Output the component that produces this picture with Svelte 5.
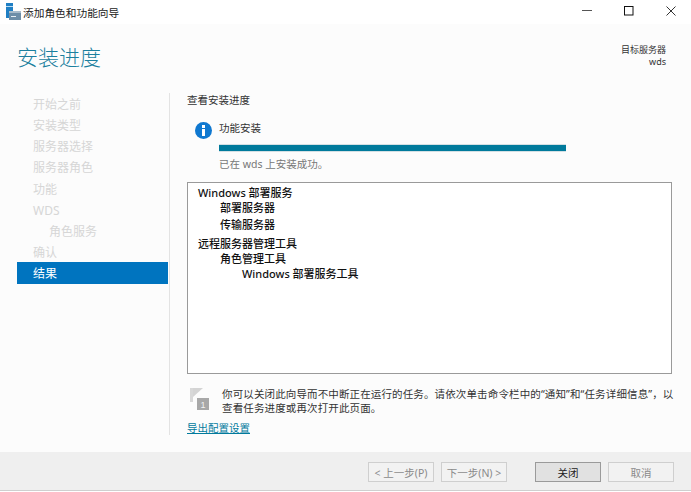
<script>
  // 向导左侧步骤，最后一项为当前页。
  const steps = [
    { label: '开始之前' },
    { label: '安装类型' },
    { label: '服务器选择' },
    { label: '服务器角色' },
    { label: '功能' },
    { label: 'WDS' },
    { label: '角色服务', sub: true },
    { label: '确认' },
    { label: '结果', active: true },
  ];

  const results = [
    { label: 'Windows 部署服务', level: 0, gap: 15 },
    { label: '部署服务器', level: 1, gap: 17 },
    { label: '传输服务器', level: 1, gap: 19 },
    { label: '远程服务器管理工具', level: 0, gap: 15 },
    { label: '角色管理工具', level: 1, gap: 15 },
    { label: 'Windows 部署服务工具', level: 2, gap: 15 },
  ];
</script>

<div class="window">
  <header class="titlebar">
    <svg class="appicon" width="15" height="18" viewBox="0 0 15 18" aria-hidden="true">
      <rect x="0" y="0" width="7" height="15" fill="#1f7fc4" />
      <rect x="0" y="3" width="7" height="1" fill="#bcdcf2" />
      <rect x="3" y="8" width="12" height="9" fill="#6d8ea8" />
      <rect x="3" y="8" width="12" height="2" fill="#a9bccb" />
      <rect x="5" y="13" width="5" height="1" fill="#e6eef4" />
    </svg>
    <span class="title">添加角色和功能向导</span>
    <div class="controls">
      <svg width="10" height="10" viewBox="0 0 10 10" aria-hidden="true">
        <path d="M0 4.5H10" stroke="#555" fill="none" />
      </svg>
      <svg width="10" height="10" viewBox="0 0 10 10" aria-hidden="true">
        <rect x="0.5" y="0.5" width="8.5" height="8.5" stroke="#111" fill="none" />
      </svg>
      <svg width="10" height="10" viewBox="0 0 10 10" aria-hidden="true">
        <path d="M0.5 0.5L9.5 9.5M9.5 0.5L0.5 9.5" stroke="#333" fill="none" />
      </svg>
    </div>
  </header>

  <div class="body">
    <div class="heading">
      <h1>安装进度</h1>
      <div class="server">
        <div>目标服务器</div>
        <div>wds</div>
      </div>
    </div>

    <div class="main">
      <nav class="steps">
        {#each steps as step}
          <div class="step" class:sub={step.sub} class:active={step.active}>{step.label}</div>
        {/each}
      </nav>

      <section class="content">
        <div class="subhead">查看安装进度</div>

        <div class="progress">
          <svg class="info" width="17" height="17" viewBox="0 0 17 17" aria-hidden="true">
            <circle cx="8.5" cy="8.5" r="8.5" fill="#0f78d0" />
            <rect x="7" y="3" width="3" height="3" fill="#fff" />
            <rect x="7" y="7" width="3" height="7" fill="#fff" />
          </svg>
          <div class="progress-body">
            <div class="progress-title">功能安装</div>
            <div class="bar"></div>
            <div class="progress-note">已在 wds 上安装成功。</div>
          </div>
        </div>

        <div class="results">
          {#each results as row}
            <div class="row level{row.level}" style="height: {row.gap}px">{row.label}</div>
          {/each}
        </div>

        <div class="notice">
          <svg class="flag" width="20" height="24" viewBox="0 0 20 24" aria-hidden="true">
            <rect x="0" y="0" width="3" height="14" fill="#d8d8d8" />
            <path d="M3 0H13L3 9Z" fill="#d4d4d4" />
            <rect x="7" y="10" width="12" height="12" fill="#a8a8a8" />
            <text x="13" y="20" text-anchor="middle" class="flagnum">1</text>
          </svg>
          <p>你可以关闭此向导而不中断正在运行的任务。请依次单击命令栏中的“通知”和“任务详细信息”，以查看任务进度或再次打开此页面。</p>
        </div>

        <a class="export" href="#export">导出配置设置</a>
      </section>
    </div>
  </div>

  <footer class="footer">
    <button disabled>&lt; 上一步(P)</button>
    <button disabled class="next">下一步(N) &gt;</button>
    <button class="primary">关闭</button>
    <button disabled>取消</button>
  </footer>
</div>

<style>
  :global(body) {
    margin: 0;
    background: #fff;
  }
  .window {
    width: 691px;
    height: 492px;
    display: flex;
    flex-direction: column;
    font-family: "Noto Sans", "Noto Sans CJK SC", sans-serif;
    font-size: 11px;
    color: #222;
    overflow: hidden;
  }
  .titlebar {
    height: 24px;
    flex: none;
    display: flex;
    align-items: center;
    background: #fff;
    padding-left: 6px;
  }
  .appicon {
    margin-right: 2px;
  }
  .title {
    font-size: 10.7px;
    color: #222;
  }
  .controls {
    margin-left: auto;
    display: flex;
    gap: 32px;
    padding-right: 15px;
    margin-bottom: 3px;
  }
  .body {
    flex: 1;
    min-height: 0;
    background: #fcfcfc;
    display: flex;
    flex-direction: column;
  }
  .heading {
    height: 69px;
    flex: none;
    display: flex;
    justify-content: space-between;
    padding: 0 25px 0 17px;
  }
  h1 {
    margin: 14px 0 0;
    font-size: 21px;
    line-height: 38px;
    font-weight: 300;
    color: #1b7f9e;
  }
  .server {
    margin-top: 20px;
    text-align: right;
    font-size: 9px;
    line-height: 12px;
    color: #333;
  }
  .main {
    flex: 1;
    min-height: 0;
    display: flex;
    align-items: flex-start;
  }
  .steps {
    width: 151px;
    margin-left: 17px;
    padding-top: 1px;
    flex: none;
    display: flex;
    flex-direction: column;
  }
  .step {
    height: 21.125px;
    line-height: 21px;
    padding-left: 16px;
    font-size: 12px;
    color: #d6d6d6;
  }
  .step.sub {
    padding-left: 32px;
  }
  .step.active {
    height: 22px;
    line-height: 23px;
    margin-top: -1px;
    background: #0074bf;
    color: #fff;
  }
  .content {
    margin-left: 1px;
    flex: 1;
    height: 342px;
    border-left: 1px solid #e3e3e3;
    padding-left: 17px;
  }
  .subhead {
    font-size: 10.5px;
    line-height: 14px;
    color: #333;
  }
  .progress {
    display: flex;
    margin: 14px 0 0 8px;
    height: 61px;
  }
  .info {
    margin-top: 1px;
    flex: none;
  }
  .progress-body {
    margin-left: 7px;
    flex: none;
    width: 347px;
  }
  .progress-title {
    font-size: 10.5px;
    line-height: 14px;
    color: #333;
  }
  .bar {
    height: 6px;
    margin-top: 9px;
    background: #007a9c;
    border: 1px solid #d4e0e4;
    border-width: 1px 0;
  }
  .progress-note {
    margin-top: 5px;
    font-size: 10.5px;
    line-height: 14px;
    color: #777;
  }
  .results {
    width: 485px;
    height: 192px;
    box-sizing: border-box;
    border: 1px solid #9a9a9a;
    background: #fff;
    padding-top: 2px;
  }
  .row {
    line-height: 15px;
    font-size: 11px;
    font-weight: 500;
    color: #111;
  }
  .level0 {
    padding-left: 10px;
  }
  .level1 {
    padding-left: 32px;
  }
  .level2 {
    padding-left: 54px;
  }
  .notice {
    display: flex;
    width: 489px;
    margin-top: 13px;
  }
  .flag {
    flex: none;
    margin: 1px 0 0 3px;
  }
  .flagnum {
    font-size: 9px;
    fill: #f2f2f2;
    font-family: "Liberation Sans", sans-serif;
  }
  .notice p {
    margin: 0 0 0 12px;
    font-size: 10.5px;
    letter-spacing: 0.13px;
    line-height: 14px;
    color: #333;
  }
  .export {
    display: block;
    width: max-content;
    margin-top: 6px;
    font-size: 10.5px;
    line-height: 14px;
    color: #007a9c;
    text-decoration: underline;
  }
  .footer {
    height: 39px;
    margin-bottom: 1px;
    flex: none;
    box-sizing: border-box;
    background: #efefef;
    border-bottom: 1px solid #cfcfcf;
    display: flex;
    align-items: center;
    padding: 2px 16px 0 368px;
  }
  button {
    width: 66px;
    height: 20px;
    padding: 0;
    box-sizing: border-box;
    border: 1px solid #cfcfcf;
    background: #f2f2f2;
    font: inherit;
    font-size: 10.5px;
    color: #8a8a8a;
  }
  .next {
    margin-left: 7px;
  }
  .primary {
    margin: 0 7px 0 28px;
    border-color: #9a9a9a;
    background: #e1e1e1;
    color: #222;
  }
</style>
